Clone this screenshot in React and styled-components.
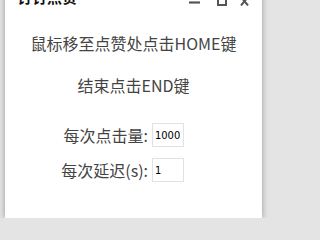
import React from 'react';
import styled, { createGlobalStyle } from 'styled-components';

const GlobalStyle = createGlobalStyle`
  body {
    margin: 0;
    background: #e4e4e4;
    font-family: "Noto Sans CJK SC", "Liberation Sans", sans-serif;
    overflow: hidden;
  }
`;

const Window = styled.div`
  margin: -12px 0 0 5px;
  width: 257px;
  height: 230px;
  background: #fff;
  box-shadow: 0 0 6px rgba(0, 0, 0, 0.35);
  display: flex;
  flex-direction: column;
`;

const TitleBar = styled.div`
  height: 18px;
  display: flex;
  align-items: flex-end;
  padding: 0 13px 0 12px;
`;

const Title = styled.span`
  flex: 1;
  align-self: center;
  font-size: 15px;
  font-weight: bold;
  color: #111;
  line-height: 18px;
`;

const ControlIcon = styled.svg`
  display: block;
  height: 10px;
  margin-left: ${(p) => p.$gap}px;
`;

const Message = styled.p`
  margin: 0;
  text-align: center;
  font-size: 16px;
  color: #444;
  line-height: 22px;
  margin-top: ${(p) => p.$top}px;
`;

const Form = styled.div`
  display: grid;
  grid-template-columns: 92px 32px;
  align-items: center;
  row-gap: 11px;
  column-gap: 4px;
  margin: 27px 0 0 51px;
`;

const Label = styled.label`
  text-align: right;
  font-size: 16px;
  color: #444;
  line-height: 22px;
`;

const Field = styled.input`
  box-sizing: border-box;
  width: 32px;
  height: 24px;
  border: 1px solid #e2e2e2;
  padding: 0 2px;
  font-family: "DejaVu Sans Condensed", "Liberation Sans Narrow", sans-serif;
  font-size: 11px;
  color: #000;
  outline: none;
`;

export default function App() {
  return (
    <>
      <GlobalStyle />
      <Window>
        <TitleBar>
          <Title>钉钉点赞</Title>
          <ControlIcon width="11" viewBox="0 0 11 10" $gap={0}>
            <path d="M0 6.5h11" stroke="#555" strokeWidth="2.2" />
          </ControlIcon>
          <ControlIcon width="10" viewBox="0 0 10 10" $gap={17}>
            <rect x="1" y="1" width="8" height="8" fill="none" stroke="#555" strokeWidth="2" />
          </ControlIcon>
          <ControlIcon width="9" viewBox="0 0 9 10" $gap={13}>
            <path d="M1 1l7 8.5M8 1l-7 8.5" stroke="#555" strokeWidth="2" />
          </ControlIcon>
        </TitleBar>
        <Message $top={26}>鼠标移至点赞处点击HOME键</Message>
        <Message $top={20}>结束点击END键</Message>
        <Form>
          <Label>每次点击量:</Label>
          <Field defaultValue="1000" />
          <Label>每次延迟(s):</Label>
          <Field defaultValue="1" />
        </Form>
      </Window>
    </>
  );
}
